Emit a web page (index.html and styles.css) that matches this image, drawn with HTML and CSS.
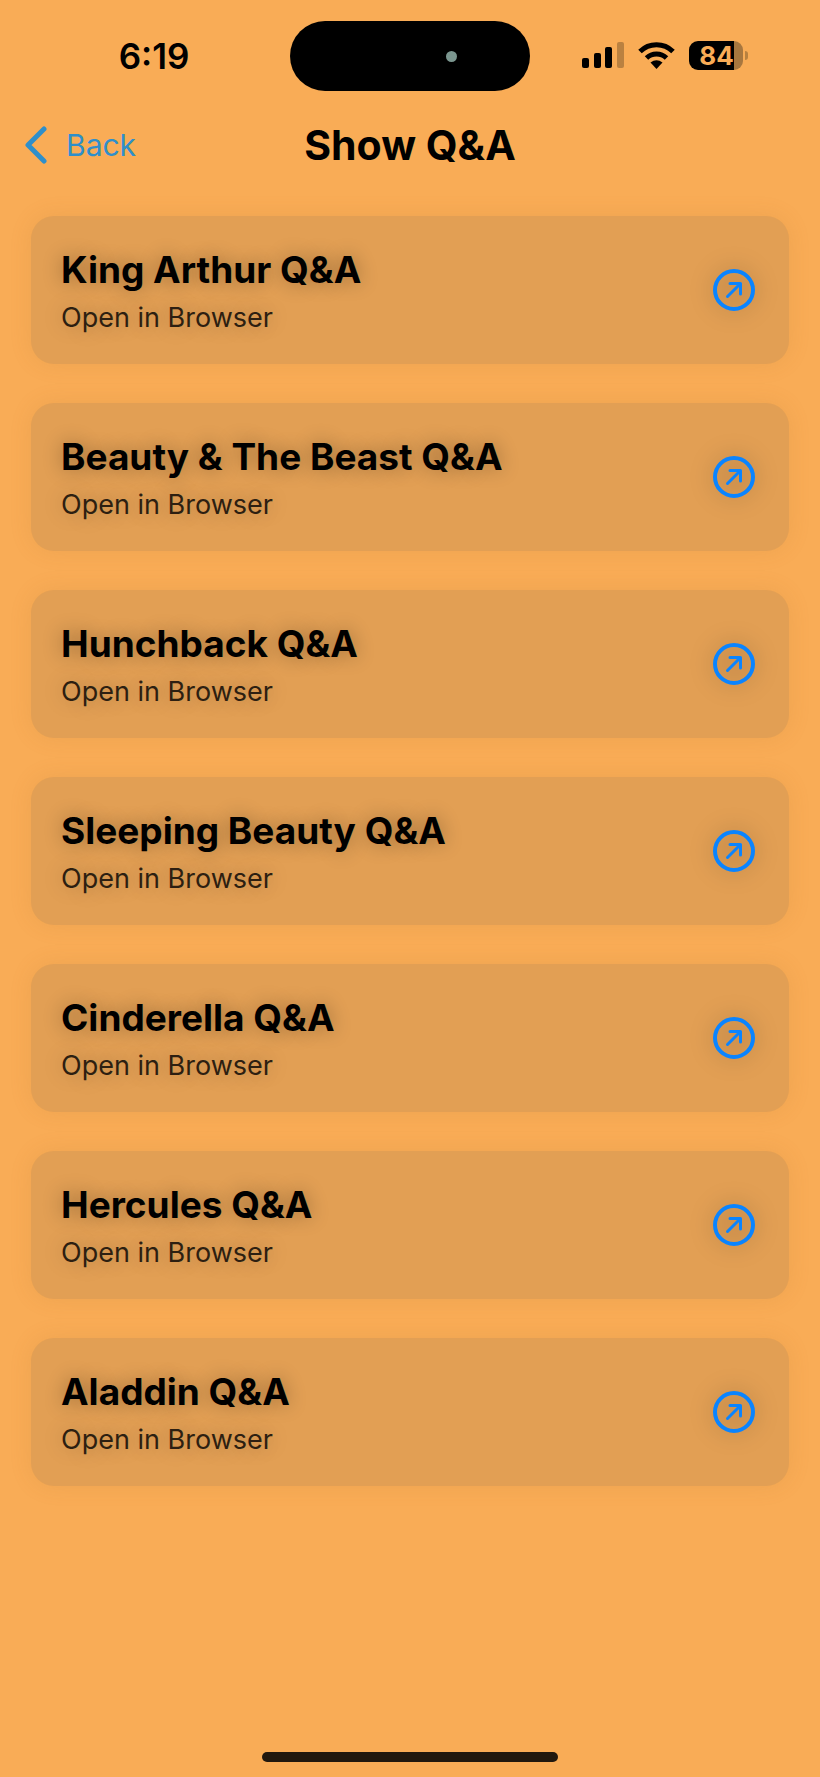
FILE: index.html
```html
<!DOCTYPE html>
<html lang="en">
<head>
    <meta charset="UTF-8">
    <meta name="viewport" content="width=device-width, initial-scale=1.0">
    <title>Show Q&amp;A</title>
    <link rel="stylesheet" href="styles.css">
</head>
<body>

    <!-- Icon shared by every card -->
    <svg class="sprite" aria-hidden="true">
        <symbol id="openIcon" viewBox="0 0 42 42">
            <circle cx="21" cy="21" r="19" fill="none" stroke="currentColor" stroke-width="4"/>
            <path d="M14.500 27.500L26.500 15.500M17 14.500H27.500V25" fill="none" stroke="currentColor" stroke-width="3" stroke-linecap="round" stroke-linejoin="round"/>
        </symbol>
    </svg>

    <!-- Status bar -->
    <div class="status-bar">
        <span class="time">6:19</span>
        <div class="island"><span class="camera"></span></div>
        <div class="status-icons">
            <svg width="42" height="26" viewBox="0 0 42 26" aria-hidden="true">
                <rect x="0" y="16" width="7" height="10" rx="2"/>
                <rect x="12" y="11" width="7" height="15" rx="2"/>
                <rect x="23" y="5" width="7" height="21" rx="2"/>
                <rect x="35" y="0" width="7" height="26" rx="2" opacity="0.250"/>
            </svg>
            <svg width="37" height="27" viewBox="0 0 37 27" aria-hidden="true">
                <path d="M2 9.500A23.500 23.500 0 0 1 35 9.500M8.500 16A14.500 14.500 0 0 1 28.500 16" fill="none" stroke="#000" stroke-width="5"/>
                <path d="M12.500 20.500Q18.500 16 24.500 20.500L18.500 27Z"/>
            </svg>
            <div class="battery">
                <span class="battery-body">84</span>
                <span class="battery-tip"></span>
            </div>
        </div>
    </div>

    <!-- Navigation bar -->
    <header class="nav-bar">
        <a class="back" href="#">
            <svg width="22" height="38" viewBox="0 0 22 38" aria-hidden="true">
                <path d="M19 3L3 19L19 35" fill="none" stroke="currentColor" stroke-width="5" stroke-linecap="round" stroke-linejoin="round"/>
            </svg>
            Back
        </a>
        <h1>Show Q&amp;A</h1>
    </header>

    <main class="show-list">
        <a class="show-card" href="#king-arthur">
            <div class="show-text">
                <h2>King Arthur Q&amp;A</h2>
                <p>Open in Browser</p>
            </div>
            <svg class="open-icon" aria-hidden="true"><use href="#openIcon"/></svg>
        </a>
        <a class="show-card" href="#beauty-and-the-beast">
            <div class="show-text">
                <h2>Beauty &amp; The Beast Q&amp;A</h2>
                <p>Open in Browser</p>
            </div>
            <svg class="open-icon" aria-hidden="true"><use href="#openIcon"/></svg>
        </a>
        <a class="show-card" href="#hunchback">
            <div class="show-text">
                <h2>Hunchback Q&amp;A</h2>
                <p>Open in Browser</p>
            </div>
            <svg class="open-icon" aria-hidden="true"><use href="#openIcon"/></svg>
        </a>
        <a class="show-card" href="#sleeping-beauty">
            <div class="show-text">
                <h2>Sleeping Beauty Q&amp;A</h2>
                <p>Open in Browser</p>
            </div>
            <svg class="open-icon" aria-hidden="true"><use href="#openIcon"/></svg>
        </a>
        <a class="show-card" href="#cinderella">
            <div class="show-text">
                <h2>Cinderella Q&amp;A</h2>
                <p>Open in Browser</p>
            </div>
            <svg class="open-icon" aria-hidden="true"><use href="#openIcon"/></svg>
        </a>
        <a class="show-card" href="#hercules">
            <div class="show-text">
                <h2>Hercules Q&amp;A</h2>
                <p>Open in Browser</p>
            </div>
            <svg class="open-icon" aria-hidden="true"><use href="#openIcon"/></svg>
        </a>
        <a class="show-card" href="#aladdin">
            <div class="show-text">
                <h2>Aladdin Q&amp;A</h2>
                <p>Open in Browser</p>
            </div>
            <svg class="open-icon" aria-hidden="true"><use href="#openIcon"/></svg>
        </a>
    </main>

    <div class="home-indicator"></div>

</body>
</html>
```
FILE: styles.css
```css
* {
    box-sizing: border-box;
}

body {
    font-family: Inter, "Liberation Sans", sans-serif;
    background-color: #f9ac56;
    color: #000;
    margin: 0;
    min-height: 100vh;
    display: flex;
    flex-direction: column;
}

h1, h2, p {
    margin: 0;
}

a {
    color: inherit;
    text-decoration: none;
}

.sprite {
    display: none;
}

/* Status bar */
.status-bar {
    display: grid;
    grid-template-columns: 1fr 240px 1fr;
    align-items: center;
    padding-top: 21px;
}

.time {
    font-size: 35px;
    font-weight: 600;
    line-height: 40px;
    text-align: center;
    padding-left: 18px;
}

.island {
    display: flex;
    align-items: center;
    justify-content: flex-end;
    height: 70px;
    padding-right: 73px;
    border-radius: 35px;
    background-color: #000;
}

.camera {
    width: 11px;
    height: 11px;
    border-radius: 50%;
    background-color: #7b968f;
}

.status-icons {
    display: flex;
    align-items: center;
    justify-content: flex-end;
    gap: 14px;
    padding-right: 72px;
    padding-bottom: 2px;
}

.battery {
    display: flex;
    align-items: center;
    gap: 2px;
}

.battery-body {
    width: 54px;
    padding-left: 1px;
    border-radius: 9px;
    background: linear-gradient(to right, #000 45px, #a8773f 45px); /* Charged part, then the empty part */
    color: #f9ac56;
    font-size: 26px;
    font-weight: 700;
    line-height: 29px;
    text-align: center;
}

.battery-tip {
    width: 3px;
    height: 9px;
    border-radius: 0 3px 3px 0;
    background-color: #b9813f;
}

/* Navigation bar */
.nav-bar {
    display: grid;
    grid-template-columns: 1fr auto 1fr;
    align-items: center;
    margin-top: 26px;
    padding: 0 25px;
}

.back {
    display: flex;
    align-items: center;
    gap: 19px;
    color: #2f8fca;
    font-size: 30px;
    line-height: 38px;
}

.nav-bar h1 {
    font-size: 41px;
    font-weight: 700;
    line-height: 56px;
}

/* List of shows */
.show-list {
    display: flex;
    flex-direction: column;
    gap: 39px;
    padding: 43px 31px;
}

.show-card {
    display: flex;
    align-items: center;
    justify-content: space-between;
    height: 148px;
    padding: 0 34px 0 30px;
    border-radius: 23px;
    background-color: #e29f54;
    box-shadow: 0 0 22px rgba(170, 110, 50, 0.14);
}

.show-text {
    padding-top: 8px;
}

.show-card h2 {
    font-size: 37px;
    font-weight: 700;
    line-height: 48px;
    text-shadow: 0 0 20px rgba(0, 0, 0, 0.33);
}

.show-card p {
    color: #2d1f11;
    font-size: 27px;
    line-height: 48px;
    text-shadow: 0 0 20px rgba(0, 0, 0, 0.25);
}

.open-icon {
    width: 42px;
    height: 42px;
    color: #0a84ff;
    filter: drop-shadow(0 0 11px rgba(0, 0, 0, 0.28));
}

.home-indicator {
    width: 36%;
    height: 10px;
    margin: auto auto 15px;
    border-radius: 5px;
    background-color: #21180e;
}
```
